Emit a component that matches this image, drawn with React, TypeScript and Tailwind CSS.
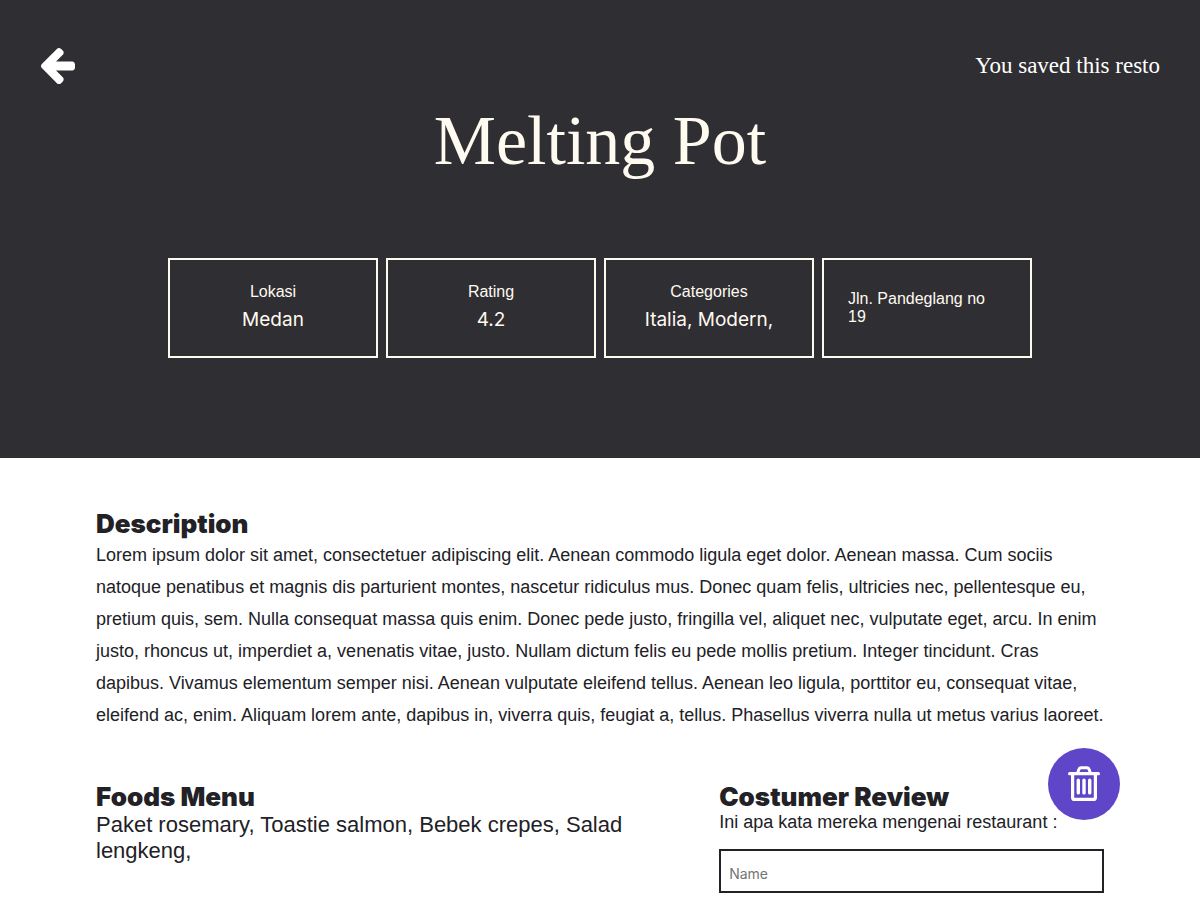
import React from "react";

type Fact = { label: string; value: string };

const facts: Fact[] = [
  { label: "Lokasi", value: "Medan" },
  { label: "Rating", value: "4.2" },
  { label: "Categories", value: "Italia, Modern," },
];

const description =
  "Lorem ipsum dolor sit amet, consectetuer adipiscing elit. Aenean commodo ligula eget dolor. Aenean massa. Cum sociis natoque penatibus et magnis dis parturient montes, nascetur ridiculus mus. Donec quam felis, ultricies nec, pellentesque eu, pretium quis, sem. Nulla consequat massa quis enim. Donec pede justo, fringilla vel, aliquet nec, vulputate eget, arcu. In enim justo, rhoncus ut, imperdiet a, venenatis vitae, justo. Nullam dictum felis eu pede mollis pretium. Integer tincidunt. Cras dapibus. Vivamus elementum semper nisi. Aenean vulputate eleifend tellus. Aenean leo ligula, porttitor eu, consequat vitae, eleifend ac, enim. Aliquam lorem ante, dapibus in, viverra quis, feugiat a, tellus. Phasellus viverra nulla ut metus varius laoreet.";

const foods = ["Paket rosemary", "Toastie salmon", "Bebek crepes", "Salad lengkeng"];

function ArrowLeft() {
  return (
    <svg viewBox="64 -75 1472 1558" className="h-9 w-[34px]" fill="currentColor" aria-hidden="true">
      <path d="M1536 640v128q0 53-32.5 90.5t-84.5 37.5h-704l293 294q38 36 38 90t-38 90l-75 76q-37 37-90 37-52 0-91-37l-651-652q-37-37-37-90 0-52 37-91l651-650q38-38 91-38 52 0 90 38l75 74q38 38 38 91t-38 91l-293 293h704q52 0 84.5 37.5t32.5 90.5z" />
    </svg>
  );
}

function Trash() {
  return (
    <svg viewBox="0 0 32 36" className="h-9 w-8" fill="none" stroke="currentColor" strokeLinecap="round" strokeLinejoin="round" aria-hidden="true">
      <path d="M1.6 7.7h28.8" strokeWidth="3.2" />
      <path d="M9.6 7.2l1.2-3.6q.6-1.9 2.4-1.9h5.6q1.8 0 2.4 1.9l1.2 3.6" strokeWidth="3" />
      <path d="M4.6 8v23.4q0 2 2 2h18.8q2 0 2-2V8" strokeWidth="3.2" />
      <path d="M10.3 14.3v12.6M16 14.3v12.6M21.7 14.3v12.6" strokeWidth="3.4" />
    </svg>
  );
}

function SectionTitle({ children }: { children: React.ReactNode }) {
  return <h2 className="font-['Inter',sans-serif] text-[26px] leading-[30px] font-black">{children}</h2>;
}

export default function App() {
  return (
    <div className="min-h-screen bg-white font-['Liberation_Sans',sans-serif] text-[#212126]">
      <header className="bg-[#2f2e33] pt-12 pb-[100px] text-[#fffaf0]">
        <div className="flex items-center justify-between px-10">
          <a href="#home" aria-label="Back" className="pl-px text-white">
            <ArrowLeft />
          </a>
          <p className="font-['Liberation_Serif',serif] text-[23px] leading-9 text-white">You saved this resto</p>
        </div>
        <h1 className="mt-4 text-center font-['Liberation_Serif',serif] text-[70px] leading-[82px] font-normal">Melting Pot</h1>
        <div className="mt-19 flex flex-wrap justify-center gap-2 px-10">
          {facts.map((fact) => (
            <div key={fact.label} className="flex h-[100px] w-[210px] flex-col items-center border-2 border-[#fffaf0] pt-[23px]">
              <p className="text-base leading-[18px]">{fact.label}</p>
              <p className="mt-[5px] font-['Inter',sans-serif] text-[19px] leading-7">{fact.value}</p>
            </div>
          ))}
          <div className="flex h-[100px] w-[210px] items-center border-2 border-[#fffaf0] px-6">
            <p className="text-base leading-[18px]">Jln. Pandeglang no 19</p>
          </div>
        </div>
      </header>

      <main className="px-[8%] pt-[51px]">
        <section>
          <SectionTitle>Description</SectionTitle>
          <p className="text-lg leading-8">{description}</p>
        </section>

        <div className="mt-[51px] grid grid-cols-[3fr_2fr] gap-[46px]">
          <section>
            <SectionTitle>Foods Menu</SectionTitle>
            <p className="text-[22px] leading-[26px]">{foods.map((food) => `${food},`).join(" ")}</p>
          </section>
          <section>
            <SectionTitle>Costumer Review</SectionTitle>
            <p className="text-lg leading-5">Ini apa kata mereka mengenai restaurant :</p>
            <form className="mt-[17px]">
              <input
                type="text"
                aria-label="Name"
                placeholder="Name"
                className="block h-11 w-full border-2 border-[#212126] px-2 pt-1 font-['Inter',sans-serif] text-sm placeholder:text-[#757575]"
              />
            </form>
          </section>
        </div>
      </main>

      <button
        type="button"
        aria-label="Remove saved resto"
        className="fixed right-20 bottom-20 flex size-18 items-center justify-center rounded-full bg-[#5f46c8] text-white"
      >
        <Trash />
      </button>
    </div>
  );
}
